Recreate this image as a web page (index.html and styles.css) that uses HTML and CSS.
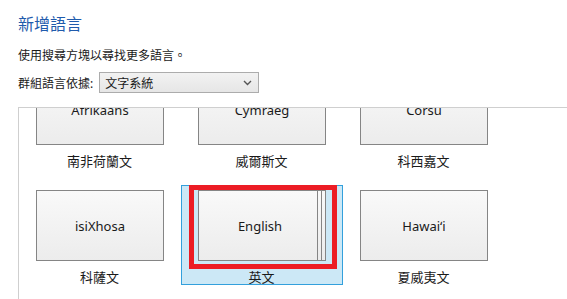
FILE: index.html
```html
<!DOCTYPE html>
<html lang="zh-Hant">
<head>
  <meta charset="UTF-8" />
  <title>新增語言</title>
  <link rel="stylesheet" href="styles.css">
</head>
<body>
  <div class="head">
    <h1>新增語言</h1>
    <p>使用搜尋方塊以尋找更多語言。</p>
    <div class="group">
      <span>群組語言依據:</span>
      <div class="select">
        <span>文字系統</span>
        <svg width="9" height="6" viewBox="0 0 9 6"><path d="M1 1 L4.5 4.5 L8 1" fill="none" stroke="#555" stroke-width="1.4"/></svg>
      </div>
    </div>
  </div>

  <div class="langs">
    <div class="grid">
      <div class="cell"><div class="tile">Afrikaans</div><div class="name">南非荷蘭文</div></div>
      <div class="cell"><div class="tile">Cymraeg</div><div class="name">威爾斯文</div></div>
      <div class="cell"><div class="tile">Corsu</div><div class="name">科西嘉文</div></div>

      <div class="cell"><div class="tile">isiXhosa</div><div class="name">科薩文</div></div>
      <div class="cell selected">
        <div class="tile stack">
          <div class="page"><div class="front">English</div></div>
        </div>
        <div class="name">英文</div>
        <div class="mark"></div>
      </div>
      <div class="cell"><div class="tile">Hawaiʻi</div><div class="name">夏威夷文</div></div>
    </div>
  </div>
</body>
</html>
```
FILE: styles.css
```css
body {
  margin: 0;
  background: #fff;
  color: #1a1a1a;
  font-family: "Noto Sans", "Noto Sans CJK TC", sans-serif;
  height: 299px;
  overflow: hidden;
}

.head {
  padding: 0 18px;
}

h1 {
  margin: 13px 0 0;
  font-size: 16px;
  line-height: 22px;
  font-weight: normal;
  color: #1f5bac;
}

p {
  margin: 13px 0 0;
  font-size: 12px;
  line-height: 16px;
}

.group {
  margin-top: 8px;
  display: flex;
  align-items: center;
  gap: 6px;
  font-size: 12px;
  height: 21px;
}

.select {
  width: 160px;
  height: 21px;
  box-sizing: border-box;
  border: 1px solid #acacac;
  background: linear-gradient(#f2f2f2, #e6e6e6);
  display: flex;
  align-items: center;
  justify-content: space-between;
  padding: 0 6px 0 5px;
  font-size: 12px;
}

.langs {
  margin: 14px 0 0 18px;
  border-top: 1px solid #cfcfcf;
  border-left: 1px solid #cfcfcf;
  height: 191px;
  overflow: hidden;
}

.grid {
  margin-top: -39px;
  display: grid;
  grid-template-columns: repeat(3, 162px);
  row-gap: 16px;
}

.cell {
  position: relative;
  height: 100px;
  box-sizing: border-box;
  padding: 5px 17px 0;
  border: 1px solid transparent;
}

.tile {
  width: 128px;
  height: 71px;
  box-sizing: border-box;
  margin-left: -1px;
  margin-top: -1px;
  border: 1px solid #858585;
  background: linear-gradient(#f9f9f9, #ececec);
  display: flex;
  align-items: center;
  justify-content: center;
  font-size: 13px;
  color: #1a1a1a;
}

.name {
  text-align: center;
  font-size: 13px;
  line-height: 22px;
  padding-top: 5px;
  margin-left: -1px;
}

.selected {
  background: #cce8f6;
  border-color: #33a0dc;
}

.stack {
  display: block;
}

.stack .page {
  height: 100%;
  margin-right: 3px;
  border-right: 1px solid #858585;
}

.stack .front {
  height: 100%;
  margin-right: 3px;
  border-right: 1px solid #858585;
  display: flex;
  align-items: center;
  justify-content: center;
  padding-left: 4px;
}

.mark {
  position: absolute;
  left: 7px;
  top: -1px;
  width: 148px;
  height: 84px;
  box-sizing: border-box;
  border: 5px solid #ec1c24;
}
```
